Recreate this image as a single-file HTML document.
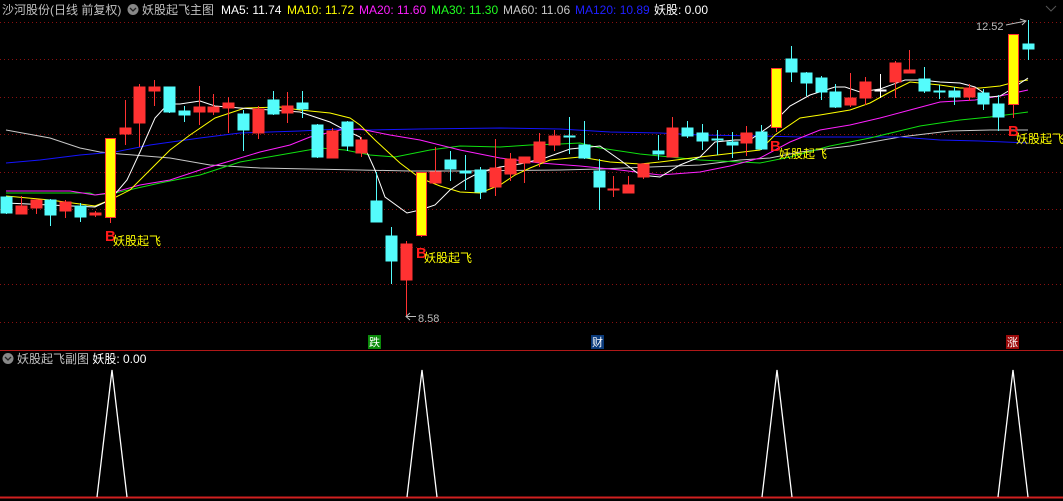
<!DOCTYPE html>
<html><head><meta charset="utf-8"><style>
html,body{margin:0;padding:0;background:#000;width:1063px;height:501px;overflow:hidden}
svg{display:block}
text{font-family:"Liberation Sans","Noto Sans CJK SC",sans-serif}
</style></head><body>
<svg width="1063" height="501" viewBox="0 0 1063 501" xmlns="http://www.w3.org/2000/svg">
<rect width="1063" height="501" fill="#000"/>
<g stroke="#8a1010" stroke-width="1" stroke-dasharray="1,3">
<line x1="0" y1="22.5" x2="1063" y2="22.5"/><line x1="0" y1="59.5" x2="1063" y2="59.5"/>
<line x1="0" y1="97.5" x2="1063" y2="97.5"/><line x1="0" y1="134.5" x2="1063" y2="134.5"/>
<line x1="0" y1="172.5" x2="1063" y2="172.5"/><line x1="0" y1="209.5" x2="1063" y2="209.5"/>
<line x1="0" y1="247.5" x2="1063" y2="247.5"/><line x1="0" y1="284.5" x2="1063" y2="284.5"/>
<line x1="0" y1="322.5" x2="1063" y2="322.5"/>
</g>
<line x1="0" y1="350.5" x2="1063" y2="350.5" stroke="#b01818"/>
<line x1="0" y1="497.5" x2="1063" y2="497.5" stroke="#d02020" stroke-width="2"/>
<g fill="none" stroke-width="1">
<polyline stroke="#c8c8c8" points="6,130 50,138 80,148 100,152 120,154 170,158 210,165 260,168 310,169 360,170 410,171 460,171 560,170 600,169 650,167 700,165 740,160 770,158 800,152 850,146 900,137 950,131 990,130 1028,130"/>
<polyline stroke="#1414ff" points="6,163 40,160 80,155 115,152 150,145 200,138 240,133 300,131 340,129 370,130 420,129 500,128 560,129 610,132 660,133 700,135 760,136 800,137 840,137 900,137 940,140 980,141 1028,143"/>
<polyline stroke="#10e010" points="6,193 90,193 95,195 115,193 160,183 200,175 240,162 280,155 320,148 345,150 370,155 395,157 430,150 460,146 500,147 530,145 560,144 580,143 600,148 640,154 700,160 740,162 760,163 790,157 830,146 870,138 920,126 960,120 990,117 1028,112"/>
<polyline stroke="#ff20ff" points="6,191 70,191 95,195 115,192 140,185 170,180 200,170 230,161 260,152 290,145 310,137 340,130 360,129 390,135 420,140 460,150 500,158 540,163 580,166 620,170 660,175 700,172 730,166 760,158 790,142 820,130 850,125 880,118 910,110 940,102 975,100 1000,96 1028,90"/>
<polyline stroke="#ffff00" points="6,196 50,200 95,206 110,200 130,190 150,170 170,150 190,135 215,118 245,108 280,107 300,110 330,113 350,118 360,125 375,140 400,163 420,178 440,186 460,192 480,193 500,185 515,175 530,168 550,160 580,157 610,162 640,164 660,162 700,157 760,150 775,135 800,118 820,115 850,110 870,103 890,92 910,82 940,85 960,88 980,88 1000,86 1015,82 1028,80"/>
<polyline stroke="#ffffff" points="6,203 50,205 95,207 110,200 127,180 140,152 155,118 168,104 180,104 200,101 215,106 240,108 270,110 300,112 330,122 345,130 360,137 375,170 385,197 407,213 420,210 435,205 450,190 465,180 480,172 500,167 520,164 545,158 570,149 600,146 620,160 640,175 660,177 680,165 700,157 715,142 735,140 750,140 770,126 790,106 810,95 835,87 845,87 860,92 880,89 905,80 920,80 940,82 960,83 975,87 990,97 1000,96 1010,90 1028,78"/>
</g>
<g>
<g stroke="#ff3232" fill="#ff3232">
<line x1="21.5" y1="196" x2="21.5" y2="214"/><rect x="16" y="206" width="11" height="8"/>
<line x1="36.5" y1="199" x2="36.5" y2="214"/><rect x="31" y="200" width="11" height="8"/>
<line x1="65.5" y1="200" x2="65.5" y2="218"/><rect x="60" y="202" width="11" height="9"/>
<line x1="95.5" y1="211" x2="95.5" y2="217"/><rect x="90" y="213" width="11" height="2"/>
<line x1="125.5" y1="100" x2="125.5" y2="145"/><rect x="120" y="128" width="11" height="6"/>
<line x1="139.5" y1="84" x2="139.5" y2="147"/><rect x="134" y="87" width="11" height="36"/>
<line x1="154.5" y1="80" x2="154.5" y2="106"/><rect x="149" y="87" width="11" height="4"/>
<line x1="199.5" y1="86" x2="199.5" y2="125"/><rect x="194" y="107" width="11" height="5"/>
<line x1="213.5" y1="94" x2="213.5" y2="115"/><rect x="208" y="107" width="11" height="5"/>
<line x1="228.5" y1="97" x2="228.5" y2="133"/><rect x="223" y="103" width="11" height="5"/>
<line x1="258.5" y1="106" x2="258.5" y2="139"/><rect x="253" y="109" width="11" height="24"/>
<line x1="287.5" y1="92" x2="287.5" y2="123"/><rect x="282" y="106" width="11" height="7"/>
<line x1="332.5" y1="128" x2="332.5" y2="158"/><rect x="327" y="131" width="11" height="27"/>
<line x1="361.5" y1="137" x2="361.5" y2="157"/><rect x="356" y="140" width="11" height="13"/>
<line x1="406.5" y1="241" x2="406.5" y2="316"/><rect x="401" y="244" width="11" height="36"/>
<line x1="435.5" y1="147" x2="435.5" y2="183"/><rect x="430" y="172" width="11" height="11"/>
<line x1="495.5" y1="139" x2="495.5" y2="196"/><rect x="490" y="168" width="11" height="19"/>
<line x1="510.5" y1="153" x2="510.5" y2="181"/><rect x="505" y="159" width="11" height="15"/>
<line x1="524.5" y1="157" x2="524.5" y2="183"/><rect x="519" y="157" width="11" height="6"/>
<line x1="539.5" y1="133" x2="539.5" y2="167"/><rect x="534" y="142" width="11" height="20"/>
<line x1="554.5" y1="130" x2="554.5" y2="151"/><rect x="549" y="136" width="11" height="9"/>
<line x1="613.5" y1="176" x2="613.5" y2="197"/><rect x="608" y="189" width="11" height="1"/>
<line x1="628.5" y1="176" x2="628.5" y2="193"/><rect x="623" y="185" width="11" height="8"/>
<line x1="643.5" y1="163" x2="643.5" y2="179"/><rect x="638" y="164" width="11" height="13"/>
<line x1="672.5" y1="117" x2="672.5" y2="157"/><rect x="667" y="128" width="11" height="29"/>
<line x1="746.5" y1="126" x2="746.5" y2="156"/><rect x="741" y="133" width="11" height="10"/>
<line x1="850.5" y1="73" x2="850.5" y2="107"/><rect x="845" y="98" width="11" height="7"/>
<line x1="865.5" y1="77" x2="865.5" y2="105"/><rect x="860" y="82" width="11" height="16"/>
<line x1="895.5" y1="61" x2="895.5" y2="98"/><rect x="890" y="63" width="11" height="19"/>
<line x1="909.5" y1="50" x2="909.5" y2="73"/><rect x="904" y="70" width="11" height="3"/>
<line x1="969.5" y1="84" x2="969.5" y2="101"/><rect x="964" y="88" width="11" height="9"/>
</g>
<g stroke="#54fcfc" fill="#54fcfc">
<line x1="6.5" y1="196" x2="6.5" y2="214"/><rect x="1" y="197" width="11" height="16"/>
<line x1="50.5" y1="199" x2="50.5" y2="226"/><rect x="45" y="200" width="11" height="15"/>
<line x1="80.5" y1="203" x2="80.5" y2="222"/><rect x="75" y="206" width="11" height="11"/>
<line x1="169.5" y1="87" x2="169.5" y2="113"/><rect x="164" y="87" width="11" height="25"/>
<line x1="184.5" y1="106" x2="184.5" y2="122"/><rect x="179" y="111" width="11" height="4"/>
<line x1="243.5" y1="110" x2="243.5" y2="151"/><rect x="238" y="114" width="11" height="16"/>
<line x1="273.5" y1="91" x2="273.5" y2="115"/><rect x="268" y="100" width="11" height="14"/>
<line x1="302.5" y1="91" x2="302.5" y2="118"/><rect x="297" y="103" width="11" height="6"/>
<line x1="317.5" y1="124" x2="317.5" y2="158"/><rect x="312" y="125" width="11" height="32"/>
<line x1="347.5" y1="121" x2="347.5" y2="151"/><rect x="342" y="122" width="11" height="24"/>
<line x1="376.5" y1="172" x2="376.5" y2="222"/><rect x="371" y="201" width="11" height="21"/>
<line x1="391.5" y1="227" x2="391.5" y2="284"/><rect x="386" y="236" width="11" height="25"/>
<line x1="450.5" y1="151" x2="450.5" y2="181"/><rect x="445" y="160" width="11" height="9"/>
<line x1="465.5" y1="155" x2="465.5" y2="190"/><rect x="460" y="171" width="11" height="2"/>
<line x1="480.5" y1="167" x2="480.5" y2="199"/><rect x="475" y="170" width="11" height="22"/>
<line x1="569.5" y1="117" x2="569.5" y2="154"/><rect x="564" y="136" width="11" height="1"/>
<line x1="584.5" y1="121" x2="584.5" y2="159"/><rect x="579" y="145" width="11" height="13"/>
<line x1="599.5" y1="159" x2="599.5" y2="210"/><rect x="594" y="171" width="11" height="16"/>
<line x1="658.5" y1="135" x2="658.5" y2="160"/><rect x="653" y="151" width="11" height="3"/>
<line x1="687.5" y1="121" x2="687.5" y2="138"/><rect x="682" y="128" width="11" height="8"/>
<line x1="702.5" y1="124" x2="702.5" y2="150"/><rect x="697" y="133" width="11" height="8"/>
<line x1="717.5" y1="130" x2="717.5" y2="155"/><rect x="712" y="139" width="11" height="1"/>
<line x1="732.5" y1="132" x2="732.5" y2="158"/><rect x="727" y="142" width="11" height="3"/>
<line x1="761.5" y1="125" x2="761.5" y2="150"/><rect x="756" y="132" width="11" height="17"/>
<line x1="791.5" y1="46" x2="791.5" y2="82"/><rect x="786" y="59" width="11" height="13"/>
<line x1="806.5" y1="72" x2="806.5" y2="96"/><rect x="801" y="73" width="11" height="10"/>
<line x1="821.5" y1="76" x2="821.5" y2="100"/><rect x="816" y="78" width="11" height="14"/>
<line x1="835.5" y1="84" x2="835.5" y2="108"/><rect x="830" y="92" width="11" height="15"/>
<line x1="924.5" y1="67" x2="924.5" y2="93"/><rect x="919" y="79" width="11" height="12"/>
<line x1="939.5" y1="85" x2="939.5" y2="99"/><rect x="934" y="91" width="11" height="1"/>
<line x1="954.5" y1="87" x2="954.5" y2="105"/><rect x="949" y="91" width="11" height="6"/>
<line x1="983.5" y1="89" x2="983.5" y2="110"/><rect x="978" y="93" width="11" height="11"/>
<line x1="998.5" y1="95" x2="998.5" y2="131"/><rect x="993" y="104" width="11" height="13"/>
<line x1="1028.5" y1="20" x2="1028.5" y2="60"/><rect x="1023" y="44" width="11" height="5"/>
</g>
<g stroke="#fff" fill="#fff"><line x1="880.5" y1="74" x2="880.5" y2="98"/><rect x="875" y="90" width="11" height="1"/></g>
<g stroke="#ff3232">
<line x1="110.5" y1="138" x2="110.5" y2="223"/><line x1="421.5" y1="172" x2="421.5" y2="237"/>
<line x1="776.5" y1="68" x2="776.5" y2="132"/><line x1="1013.5" y1="34" x2="1013.5" y2="118"/>
</g>
<g fill="#ffff00" stroke="#ff3232" stroke-width="1">
<rect x="105.5" y="138.5" width="10" height="79"/><rect x="416.5" y="172.5" width="10" height="63"/>
<rect x="771.5" y="68.5" width="10" height="59"/><rect x="1008.5" y="34.5" width="10" height="70"/>
</g>
</g>
<g font-size="15" font-weight="bold" fill="#ff1a1a">
<text x="105" y="241">B</text><text x="416" y="258">B</text><text x="770" y="151">B</text><text x="1008" y="136">B</text>
</g>
<g font-size="12" fill="#ffff00">
<text x="113" y="245">妖股起飞</text><text x="424" y="262">妖股起飞</text><text x="779" y="158">妖股起飞</text><text x="1016" y="143">妖股起飞</text>
</g>
<line x1="406" y1="316.5" x2="416" y2="316.5" stroke="#bbb"/><path d="M410 313 L406 316.5 L410 320" fill="none" stroke="#bbb"/>
<text x="418" y="322" font-size="11" fill="#bbb">8.58</text>
<text x="976" y="30" font-size="11" fill="#bbb">12.52</text>
<line x1="1006" y1="25" x2="1026" y2="21" stroke="#bbb"/><path d="M1020 19 L1026 21 L1022 25" fill="none" stroke="#bbb"/>
<g font-size="12">
<text x="2" y="14" fill="#c0c0c0">沙河股份(日线 前复权)</text>
<circle cx="133" cy="9.5" r="5.5" fill="#888"/><path d="M130 8 L133 11 L136 8" fill="none" stroke="#222" stroke-width="1.3"/>
<text x="142" y="14" fill="#c0c0c0">妖股起飞主图</text>
<text x="221" y="14" fill="#fff">MA5: 11.74</text>
<text x="287" y="14" fill="#ffff00">MA10: 11.72</text>
<text x="359" y="14" fill="#ff20ff">MA20: 11.60</text>
<text x="431" y="14" fill="#20ff20">MA30: 11.30</text>
<text x="503" y="14" fill="#c8c8c8">MA60: 11.06</text>
<text x="575" y="14" fill="#2020ff">MA120: 10.89</text>
<text x="654" y="14" fill="#fff">妖股: 0.00</text>
</g>
<path d="M1046 6 L1051 11 L1056 6" fill="none" stroke="#555"/>
<rect x="368" y="335" width="13" height="14" fill="#0a8a0a"/><text x="369" y="346" font-size="11" fill="#fff">跌</text>
<rect x="591" y="335" width="13" height="14" fill="#0a3a7a"/><text x="592" y="346" font-size="11" fill="#fff">财</text>
<rect x="1006" y="335" width="13" height="14" fill="#9a0a0a"/><text x="1007" y="346" font-size="11" fill="#fff">涨</text>
<circle cx="8" cy="358.5" r="5.5" fill="#888"/><path d="M5 357 L8 360 L11 357" fill="none" stroke="#222" stroke-width="1.3"/>
<text x="17" y="363" font-size="12" fill="#c0c0c0">妖股起飞副图 <tspan fill="#fff">妖股: 0.00</tspan></text>
<g fill="none" stroke="#fff" stroke-width="1.3">
<polyline points="97,497 112,370 127,497"/><polyline points="407,497 422,370 437,497"/>
<polyline points="762,497 777,370 792,497"/><polyline points="998,497 1013,370 1028,497"/>
</g>
</svg>
</body></html>
